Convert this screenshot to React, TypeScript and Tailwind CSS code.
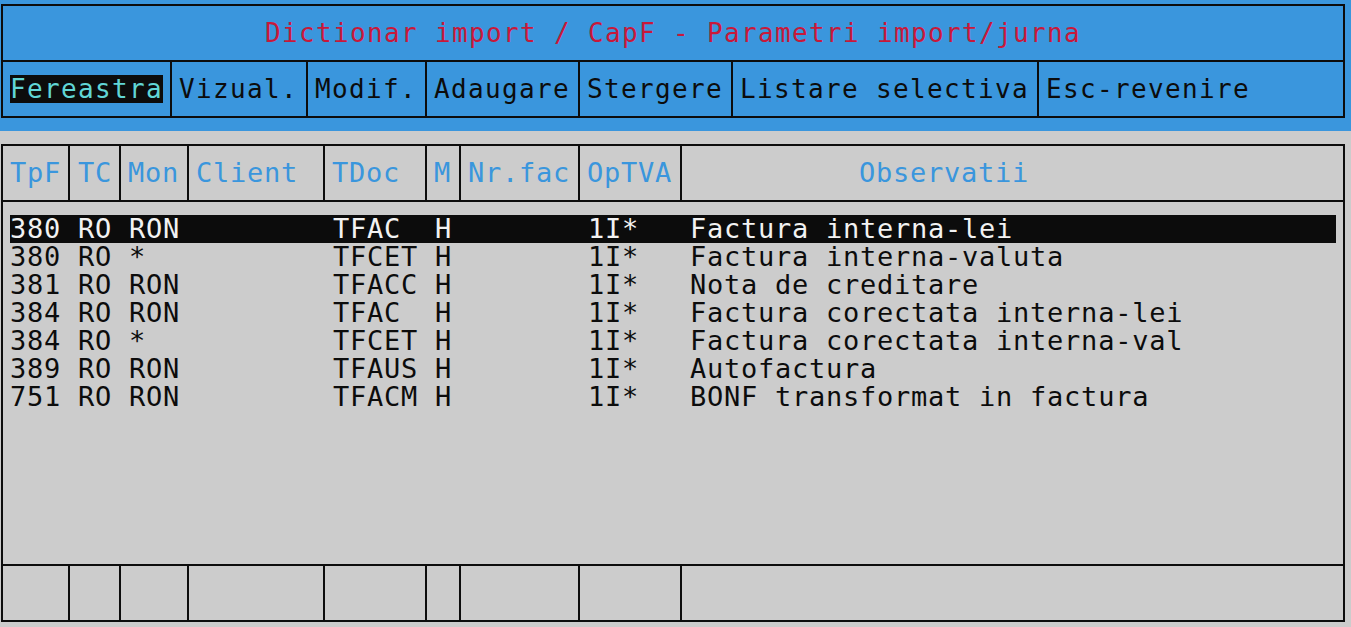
import React from "react";

// console-style window: Campbell palette, 17px character cells, 28px rows
const mono = "font-['DejaVu_Sans_Mono',monospace]";

type MenuItem = { label: string; width: string; active?: boolean };

const menu: MenuItem[] = [
  { label: "Fereastra", width: "w-[169px]", active: true },
  { label: "Vizual.", width: "w-[136px]" },
  { label: "Modif.", width: "w-[119px]" },
  { label: "Adaugare", width: "w-[153px]" },
  { label: "Stergere", width: "w-[153px]" },
  { label: "Listare selectiva", width: "w-[306px]" },
  { label: "Esc-revenire", width: "flex-1" },
];

type Column = { label: string; width: string; pad: string };

const columns: Column[] = [
  { label: "TpF", width: "w-[67px]", pad: "pl-[7px]" },
  { label: "TC", width: "w-[51px]", pad: "pl-[8px]" },
  { label: "Mon", width: "w-[68px]", pad: "pl-[7px]" },
  { label: "Client", width: "w-[136px]", pad: "pl-[7px]" },
  { label: "TDoc", width: "w-[102px]", pad: "pl-[7px]" },
  { label: "M", width: "w-[34px]", pad: "pl-[7px]" },
  { label: "Nr.fac", width: "w-[119px]", pad: "pl-[7px]" },
  { label: "OpTVA", width: "w-[102px]", pad: "pl-[7px]" },
  { label: "Observatii", width: "flex-1", pad: "pl-[177px]" },
];

type Row = {
  tpf: string;
  tc: string;
  mon: string;
  tdoc: string;
  m: string;
  optva: string;
  obs: string;
};

const rows: Row[] = [
  { tpf: "380", tc: "RO", mon: "RON", tdoc: "TFAC", m: "H", optva: "1I*", obs: "Factura interna-lei" },
  { tpf: "380", tc: "RO", mon: "*", tdoc: "TFCET", m: "H", optva: "1I*", obs: "Factura interna-valuta" },
  { tpf: "381", tc: "RO", mon: "RON", tdoc: "TFACC", m: "H", optva: "1I*", obs: "Nota de creditare" },
  { tpf: "384", tc: "RO", mon: "RON", tdoc: "TFAC", m: "H", optva: "1I*", obs: "Factura corectata interna-lei" },
  { tpf: "384", tc: "RO", mon: "*", tdoc: "TFCET", m: "H", optva: "1I*", obs: "Factura corectata interna-val" },
  { tpf: "389", tc: "RO", mon: "RON", tdoc: "TFAUS", m: "H", optva: "1I*", obs: "Autofactura" },
  { tpf: "751", tc: "RO", mon: "RON", tdoc: "TFACM", m: "H", optva: "1I*", obs: "BONF transformat in factura" },
];

const DataRow = ({ row, selected }: { row: Row; selected: boolean }) => (
  <div
    className={
      "flex h-[28px] w-[1326px] items-center whitespace-pre text-[27px] leading-[28px] tracking-[0.75px] " +
      (selected ? "bg-[#0c0c0c] text-[#f2f2f2]" : "text-[#0c0c0c]")
    }
  >
    <span className="w-[68px]">{row.tpf}</span>
    <span className="w-[51px]">{row.tc}</span>
    <span className="w-[204px]">{row.mon}</span>
    <span className="w-[102px]">{row.tdoc}</span>
    <span className="w-[153px]">{row.m}</span>
    <span className="w-[102px]">{row.optva}</span>
    <span className="flex-1">{row.obs}</span>
  </div>
);

export default function App() {
  return (
    <div className={`h-[627px] w-full overflow-hidden bg-[#cccccc] ${mono}`}>
      {/* title + menu bar */}
      <div className="bg-[#3a96dd] pb-[13px] pt-[4px]">
        <div className="ml-[1px] w-[1344px] border-2 border-[#0c0c0c]">
          <div className="flex h-[54px] items-center justify-center text-[26px] tracking-[1.35px] text-[#c8183a]">
            Dictionar import / CapF - Parametri import/jurna
          </div>
          <div className="flex h-[56px] border-t-2 border-[#0c0c0c] text-[26px] tracking-[1.35px] text-[#0c0c0c]">
            {menu.map((item, i) => (
              <div
                key={item.label}
                className={
                  "flex items-center whitespace-pre pl-[7px] " +
                  item.width +
                  (i < menu.length - 1 ? " border-r-2 border-[#0c0c0c]" : "")
                }
              >
                {item.active ? (
                  <span className="flex h-[28px] w-[153px] items-center bg-[#0c0c0c] text-[#61d6d6]">
                    {item.label}
                  </span>
                ) : (
                  item.label
                )}
              </div>
            ))}
          </div>
        </div>
      </div>

      {/* records table */}
      <div className="pt-[13px]">
        <div className="ml-[1px] w-[1344px] border-2 border-[#0c0c0c]">
          <div className="flex h-[56px] border-b-2 border-[#0c0c0c] text-[27px] tracking-[0.75px] text-[#3a96dd]">
            {columns.map((col, i) => (
              <div
                key={col.label}
                className={
                  "flex items-center whitespace-pre " +
                  col.width +
                  " " +
                  col.pad +
                  (i < columns.length - 1 ? " border-r-2 border-[#0c0c0c]" : "")
                }
              >
                {col.label}
              </div>
            ))}
          </div>

          <div className="h-[362px] pl-[7px] pt-[13px]">
            {rows.map((row, i) => (
              <DataRow key={i} row={row} selected={i === 0} />
            ))}
          </div>

          <div className="flex h-[56px] border-t-2 border-[#0c0c0c]">
            {columns.map((col, i) => (
              <div
                key={col.label}
                className={col.width + (i < columns.length - 1 ? " border-r-2 border-[#0c0c0c]" : "")}
              />
            ))}
          </div>
        </div>
      </div>
    </div>
  );
}
